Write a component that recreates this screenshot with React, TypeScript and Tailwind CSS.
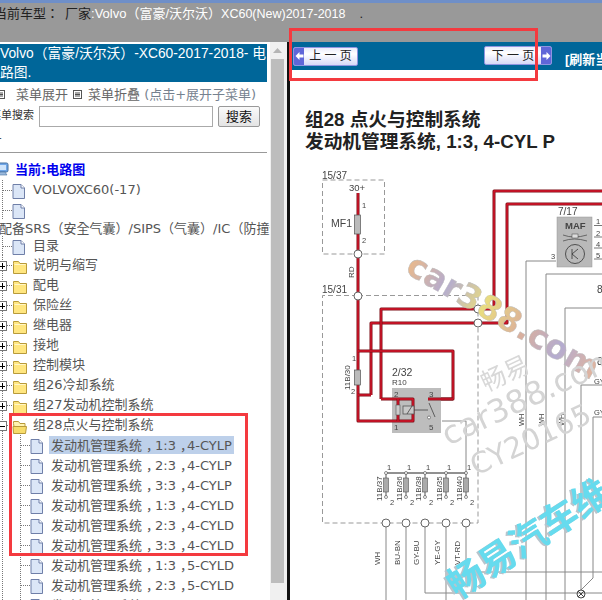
import React from "react";

const cjk = "font-['Liberation_Sans','Noto_Sans_CJK_SC',sans-serif]";
const tree = "font-['DejaVu_Sans','Noto_Sans_CJK_TC',sans-serif]";

function Prefix({ level, kind, box }: { level: 1 | 2; kind: "doc" | "folder" | "open"; box?: "plus" | "minus" }) {
  const ix = level === 1 ? 13 : 31;
  return (
    <svg width={level === 1 ? 30 : 48} height={20} className="shrink-0" shapeRendering="crispEdges">
      <line x1={2.5} y1={0} x2={2.5} y2={20} stroke="#777" strokeDasharray="1 1" />
      {level === 2 && <line x1={20.5} y1={0} x2={20.5} y2={20} stroke="#777" strokeDasharray="1 1" />}
      <line x1={level === 1 ? 3 : 21} y1={10.5} x2={ix} y2={10.5} stroke="#777" strokeDasharray="1 1" />
      {box && (
        <g>
          <rect x={-2.5} y={6.5} width={9} height={9} fill="#fff" stroke="#777" />
          <line x1={-1} y1={11} x2={5} y2={11} stroke="#000" />
          {box === "plus" && <line x1={2.5} y1={8} x2={2.5} y2={14} stroke="#000" />}
        </g>
      )}
      {kind === "doc" && (
        <g shapeRendering="auto">
          <path d="M13 4.500h8l3.500 3.500v10.500h-11.500z" transform={`translate(${ix - 13} 0)`} fill="#dbe6f7" stroke="#6f7fa8" />
          <path d="M21 4.500v3.500h3.500" transform={`translate(${ix - 13} 0)`} fill="#fff" stroke="#6f7fa8" />
        </g>
      )}
      {kind === "folder" && (
        <g shapeRendering="auto">
          <path d="M13.500 8.500v-2h5l1.500 2h6.500v10h-13z" fill="#ffe680" stroke="#b89a3a" />
          <path d="M14.500 9.500h11" stroke="#fff6c8" />
        </g>
      )}
      {kind === "open" && (
        <g shapeRendering="auto">
          <path d="M13.500 8.500v-2h5l1.500 2h5v3h-11z" fill="#fff3b0" stroke="#b89a3a" />
          <path d="M13.500 18.500l-0.500-7h13.500l-1 7z" fill="#f7dc6a" stroke="#b89a3a" />
        </g>
      )}
    </svg>
  );
}

function Row({ label, level = 1, kind = "folder", box, selected, h = "h-5" }: { label?: React.ReactNode; level?: 1 | 2; kind?: "doc" | "folder" | "open"; box?: "plus" | "minus"; selected?: boolean; h?: string }) {
  return (
    <div className={`flex items-center ${h} overflow-visible whitespace-nowrap text-[13px] text-[#555]`}>
      <Prefix level={level} kind={kind} box={box} />
      {label && (
        <span className={`leading-[18px] h-[18px] ${level === 1 ? "pl-[3px]" : "pl-[2px] pr-[2px] ml-px"} ${selected ? "bg-[#bdd0ea]" : ""}`}>{label}</span>
      )}
    </div>
  );
}

function Comma({ tight }: { tight?: boolean }) {
  return <span className={`relative left-[4px] font-['Noto_Sans_CJK_SC',sans-serif] ${tight ? "-mr-[2px]" : ""}`}>，</span>;
}

function Toggle() {
  return (
    <svg width="9" height="9" className="shrink-0">
      <rect x="0.500" y="0.500" width="8" height="8" fill="#fff" stroke="#555" />
      <path d="M2 3h5M2 4.500h5M2 6h5" stroke="#222" strokeWidth="0.800" />
    </svg>
  );
}

function NavButton({ label, dir }: { label: string; dir: "prev" | "next" }) {
  const icon = (
    <div className="w-[10px] h-full bg-[#5f66d8] flex items-center justify-center">
      <svg width="9" height="10" viewBox="0 0 9 10">
        <path d={dir === "prev" ? "M0.500 5L4.500 1v2.500h4v3h-4V9z" : "M8.500 5L4.500 1v2.500h-4v3h4V9z"} fill="#fff" />
      </svg>
    </div>
  );
  return (
    <div className={`flex items-stretch shrink-0 h-[19px] border border-[#8f94e0] rounded-[2px] overflow-hidden ${dir === "prev" ? "w-[65px]" : "w-[68px]"} bg-[linear-gradient(#e9ebfb,#fff_35%,#d6d9f7)]`}>
      {dir === "prev" && icon}
      <div className={`flex-1 flex items-center justify-center text-[12px] text-[#222] whitespace-pre ${cjk}`}>{label}</div>
      {dir === "next" && icon}
    </div>
  );
}

function Wire({ d }: { d: string }) {
  return (
    <g fill="none" strokeLinejoin="round">
      <path d={d} stroke="#7c1018" strokeWidth="3" />
      <path d={d} stroke="#d8142a" strokeWidth="1.400" />
    </g>
  );
}

function Diagram() {
  const fuses = [
    [386, "11B/37", "WH"],
    [406, "11B/36", "BU-BN"],
    [425, "11B/38", "GY-BU"],
    [446, "11B/35", "YE-GY"],
    [466, "11B/40", "VT-RD"],
  ] as const;
  const t = { fontFamily: "'Liberation Sans',sans-serif", fill: "#444" };
  return (
    <svg width="312" height="440" viewBox="290 160 312 440" className="block blur-[0.3px]">
      <defs>
        <linearGradient id="wm" x1="0" y1="0" x2="1" y2="0">
          <stop offset="0" stopColor="#e9b98c" />
          <stop offset="0.2" stopColor="#b4acd0" />
          <stop offset="0.4" stopColor="#e9dc80" />
          <stop offset="0.6" stopColor="#dcb09a" />
          <stop offset="0.8" stopColor="#b4acd0" />
          <stop offset="1" stopColor="#e3b59c" />
        </linearGradient>
      </defs>
      <g fill="none" stroke="#888" strokeWidth="1">
        <path d="M556 261H526V600" />
        <path d="M546 600V274H602" />
        <path d="M565 600V308H602" />
        <path d="M581 590V385H602" />
        <path d="M581 590L593 578V417H602" />
        <path d="M442 421H466V473" />
        <path d="M386 523V600M406 523V600M425 523V593H602M446 523V600M466 523V572H602" />
      </g>
      <g fill="none" stroke="#999" strokeWidth="1" strokeDasharray="5 3">
        <rect x="322.500" y="180" width="62" height="74" />
        <path d="M358 295.500H478V523H322.500V295.500H358" />
      </g>
      <Wire d="M358 193V396V421H392" />
      <Wire d="M371 395V323H507V204H602" />
      <Wire d="M358 395H371" />
      <Wire d="M381 399V309H494V191H602" />
      <Wire d="M358 351H453V399H428V403" />
      <rect x="392" y="388" width="49" height="45" fill="#bdbdbd" />
      <Wire d="M381 399H413V421H392" />
      <Wire d="M428 399H453" />
      <Wire d="M398 399V421" />
      <rect x="396" y="405" width="4" height="10" fill="#ccc" stroke="#555" strokeWidth="0.600" />
      <rect x="403" y="406" width="11" height="8" fill="#c8c8c8" stroke="#555" strokeWidth="0.800" />
      <path d="M407 414l5-8M414 410h14M429 403l6 14" stroke="#444" strokeWidth="0.800" fill="none" />
      <circle cx="429" cy="417.500" r="1.500" fill="#fff" stroke="#444" strokeWidth="0.600" />
      <text x="394" y="397" fontSize="8" {...t}>2</text>
      <text x="429" y="397" fontSize="8" {...t}>3</text>
      <text x="394" y="430" fontSize="8" {...t}>1</text>
      <text x="429" y="430" fontSize="8" {...t}>5</text>
      <text x="392" y="376" fontSize="10.500" {...t}>2/32</text>
      <text x="392" y="385" fontSize="8" {...t}>R10</text>
      <rect x="354.500" y="215" width="6" height="19" fill="#bbb" stroke="#555" strokeWidth="0.700" />
      <rect x="354.500" y="370" width="6" height="15" fill="#bbb" stroke="#555" strokeWidth="0.700" />
      <text x="322" y="179" fontSize="10" {...t}>15/37</text>
      <text x="349" y="191" fontSize="9.500" {...t}>30+</text>
      <text x="362" y="208" fontSize="7.500" {...t}>1</text>
      <text x="362" y="243" fontSize="7.500" {...t}>2</text>
      <text x="331" y="227" fontSize="10.500" {...t}>MF1</text>
      <text x="322" y="293" fontSize="10" {...t}>15/31</text>
      <text transform="translate(354 278) rotate(-90)" fontSize="8" {...t}>RD</text>
      <text x="352" y="361" fontSize="7.500" {...t}>1</text>
      <text x="351" y="394" fontSize="7.500" {...t}>2</text>
      <text transform="translate(350 390) rotate(-90)" fontSize="8" {...t}>11B/30</text>
      <g fill="#fff" stroke="#666">
        <circle cx="358" cy="254" r="4" />
        <circle cx="358" cy="296" r="4" />
        <circle cx="478" cy="309" r="4" />
        <circle cx="478" cy="323" r="4" />
      </g>
      <text x="558" y="215" fontSize="10" {...t}>7/17</text>
      <rect x="557" y="217" width="35" height="50" fill="#b9b9b9" stroke="#999" strokeWidth="0.500" />
      <text x="565" y="229" fontSize="9.500" fontWeight="700" {...t}>MAF</text>
      <path d="M563 235q11 4 24 0M563 241q11-4 24 0" stroke="#444" strokeWidth="0.700" fill="none" />
      <rect x="572" y="234" width="6" height="4" fill="#ddd" stroke="#444" strokeWidth="0.500" />
      <circle cx="575" cy="254" r="9.500" fill="none" stroke="#333" strokeWidth="0.800" />
      <path d="M572 249v10M572 254l6-5M572 254l6 5" stroke="#333" strokeWidth="0.800" fill="none" />
      <path d="M594 225.500H602M594 237H602M594 248H602M594 259H602" stroke="#777" fill="none" />
      <text x="596" y="224" fontSize="7.500" {...t}>1</text>
      <text x="596" y="236" fontSize="7.500" {...t}>2</text>
      <text x="596" y="247" fontSize="7.500" {...t}>4</text>
      <text x="596" y="258" fontSize="7.500" {...t}>5</text>
      <text x="551" y="259" fontSize="7.500" {...t}>3</text>
      <text x="597" y="293" fontSize="10" {...t}>8</text>
      <text x="597" y="365" fontSize="10" {...t}>8</text>
      <text x="594" y="384" fontSize="7.500" {...t}>GY</text>
      <text x="594" y="415" fontSize="7.500" {...t}>GY</text>
      <text transform="translate(524 426) rotate(-90)" fontSize="7.500" {...t}>WH</text>
      <text transform="translate(544 426) rotate(-90)" fontSize="7.500" {...t}>WH</text>
      <text transform="translate(564 426) rotate(-90)" fontSize="7.500" {...t}>WH</text>
      <line x1="386" y1="473" x2="466" y2="473" stroke="#222" strokeWidth="1" />
      {fuses.map(([x, n, c]) => (
        <g key={n}>
          <line x1={x} y1={473} x2={x} y2={498} stroke="#555" />
          <rect x={x - 2.5} y={478} width={5} height={14} fill="#aaa" stroke="#555" strokeWidth="0.600" />
          <circle cx={x} cy={473} r={1.500} fill="#fff" stroke="#444" strokeWidth="0.600" />
          <circle cx={x} cy={497} r={1.500} fill="#fff" stroke="#444" strokeWidth="0.600" />
          <circle cx={x} cy={523} r={4} fill="#fff" stroke="#666" />
          <text x={x + 1} y={470} fontSize="7.500" {...t}>1</text>
          <text x={x + 4} y={505} fontSize="7.500" {...t}>2</text>
          <text transform={`translate(${x - 4} 501) rotate(-90)`} fontSize="8" {...t}>{n}</text>
          <text transform={`translate(${x - 6} 565) rotate(-90)`} fontSize="8" {...t}>{c}</text>
        </g>
      ))}
      <circle cx="581" cy="594" r="4" fill="none" stroke="#444" />
      <path d="M578 591l6 6M584 591l-6 6" stroke="#444" />
      <text transform="translate(404 272) rotate(30)" fontSize="33" fontWeight="700" fontFamily="'DejaVu Sans',sans-serif" fill="url(#wm)" stroke="#bbb" strokeWidth="0.400">car388.com</text>
      <text transform="translate(486 392) rotate(-25)" fontSize="25" fontFamily="'Noto Sans CJK SC',sans-serif" fill="#d8d8d8">畅易</text>
      <text transform="translate(448 446) rotate(-25)" fontSize="32" fontFamily="'DejaVu Sans',sans-serif" fill="#d4d4d4">car388.com</text>
      <text transform="translate(476 476) rotate(-25)" fontSize="29" fontFamily="'DejaVu Sans',sans-serif" fill="#d4d4d4">CY20165</text>
      <text transform="translate(456 601) rotate(-33)" fontSize="37" fontWeight="700" fontFamily="'Noto Sans CJK SC',sans-serif" fill="#b8c4cc">畅易汽车维</text>
      <text transform="translate(458 600) rotate(-33)" fontSize="37" fontWeight="700" fontFamily="'Noto Sans CJK SC',sans-serif" fill="#66dbee">畅易汽车维</text>
    </svg>
  );
}

export default function App() {
  const sub = [["1:3", "4-CYLP"], ["2:3", "4-CYLP"], ["3:3", "4-CYLP"], ["1:3", "4-CYLD"], ["2:3", "4-CYLD"], ["3:3", "4-CYLD"], ["1:3", "5-CYLD"], ["2:3", "5-CYLD"], ["3:3", "5-CYLD"]];
  const folders = ["说明与缩写", "配电", "保险丝", "继电器", "接地", "控制模块", "组26冷却系统", "组27发动机控制系统"];
  return (
    <div className={`relative w-[602px] h-[600px] overflow-hidden bg-[#999] ${tree}`}>
      <div className="h-[3px] bg-[#6f8fc8]" />
      <div className="h-[39px] -ml-[6px] pt-[1px] text-[13px] leading-[20px] text-white whitespace-nowrap font-['Liberation_Sans','Noto_Sans_CJK_TC',sans-serif]">
        <span className="text-[#222]">当前车型：</span>
        <span className="ml-[6px] text-[#222]">厂家</span>:Volvo（富豪/沃尔沃）<span className="text-[12.5px]">XC60(New)2017-2018</span>
        <span className="ml-[14px] text-[#222]">.</span>
      </div>
      <div className="flex h-[558px]">
        <div className="w-[270px] bg-white overflow-hidden">
          <div className="h-[2px]" />
          <div className="w-[267px] h-[38px] bg-[#006699] text-white text-[13.800px] leading-[19px] overflow-hidden whitespace-nowrap font-['Liberation_Sans','Noto_Sans_CJK_TC',sans-serif]">
            Volvo（富豪/沃尔沃）-XC60-2017-2018- 电<br />路图.
          </div>
          <div className="flex items-center h-[22px] pt-[3px] -ml-[4px] text-[13px] text-[#666] whitespace-nowrap">
            <Toggle />
            <span className="ml-[11px]">菜单展开</span>
            <span className="ml-[5px]"><Toggle /></span>
            <span className="ml-[6px]">菜单折叠 <span className="text-[#76828f]">(点击+展开子菜单)</span></span>
          </div>
          <div className="flex items-center h-[24px] -ml-[10px]">
            <span className="w-[49px] text-[11px] text-[#333] whitespace-nowrap">菜单搜索</span>
            <input className="w-[174px] h-[21px] border border-[#aaa] bg-white" />
            <button className="ml-[5px] w-[42px] h-[21px] border border-[#999] rounded-[2px] bg-[linear-gradient(#fafafa,#e4e4e4)] text-[13px] text-[#111]">搜索</button>
          </div>
          <div className="h-[25px] border-b border-[#999] w-[269px] text-[10px] leading-[20px] text-[#333] -ml-[2px]">-</div>
          <div className="flex items-center h-[18px] mt-[8px] whitespace-nowrap">
            <svg width="10" height="16" viewBox="0 0 10 16" className="shrink-0">
              <rect x="-3" y="1" width="11" height="9" rx="1.500" fill="#6fa6e8" stroke="#47709f" />
              <rect x="-1" y="3" width="7" height="5" fill="#cfe4fb" />
              <path d="M-2 13h9l-2-3h-5z" fill="#9bb9dc" stroke="#47709f" strokeWidth="0.600" />
            </svg>
            <span className="ml-[5px] text-[13px] font-bold text-[#0000ee]">当前:电路图</span>
          </div>
          <div className="mt-px">
            <Row kind="doc" label="VOLVOXC60(-17)" />
            <Row kind="doc" />
            <div className="h-[17px] leading-[17px] -ml-px text-[13px] text-[#555] whitespace-nowrap">配备SRS（安全气囊）/SIPS（气囊）/IC（防撞保护）</div>
            <Row kind="doc" label="目录" h="h-[18px]" />
            {folders.map((f) => (
              <Row key={f} kind="folder" box="plus" label={f} />
            ))}
            <Row kind="open" box="minus" label="组28点火与控制系统" />
            {sub.map(([a, b], i) => (
              <Row key={a + b} level={2} kind="doc" selected={i === 0} label={<>发动机管理系统<Comma />{a}<Comma tight />{b}</>} />
            ))}
          </div>
        </div>
        <div className="w-[17px] bg-[#f0f0f0] flex flex-col pl-px">
          <div className="h-[17px] flex items-center justify-center pr-[3px]">
            <svg width="9" height="5"><path d="M4.500 0L9 5H0z" fill="#b5b5b5" /></svg>
          </div>
          <div className="w-[13px] h-[524px] bg-[#bdbdbd]" />
        </div>
        <div className="w-[3px] bg-[#111]" />
        <div className="flex-1 bg-white overflow-hidden">
          <div className="h-[28px] bg-[#006699] flex items-center pl-[3px] whitespace-nowrap">
            <NavButton dir="prev" label="上 一 页" />
            <div className="ml-[126px] -mt-[1px] shrink-0"><NavButton dir="next" label="下 一 页" /></div>
            <span className={`ml-[13px] mt-[8px] shrink-0 text-[13px] font-bold text-white ${cjk}`}>[刷新当前页]</span>
          </div>
          <div className={`h-[90px] pt-[39px] pl-[15px] text-[18.7px] leading-[22px] font-bold text-[#222] whitespace-nowrap ${cjk}`}>
            <div>组28 点火与控制系统</div>
            <div>发动机管理系统, 1:3, 4-CYL P</div>
          </div>
          <Diagram />
        </div>
      </div>
      <div className="absolute left-[289px] top-[28px] w-[249px] h-[53px] border-[3px] border-[#f43a3f]" />
      <div className="absolute left-[9px] top-[413px] w-[239px] h-[143px] border-[3px] border-[#f43a3f]" />
    </div>
  );
}
